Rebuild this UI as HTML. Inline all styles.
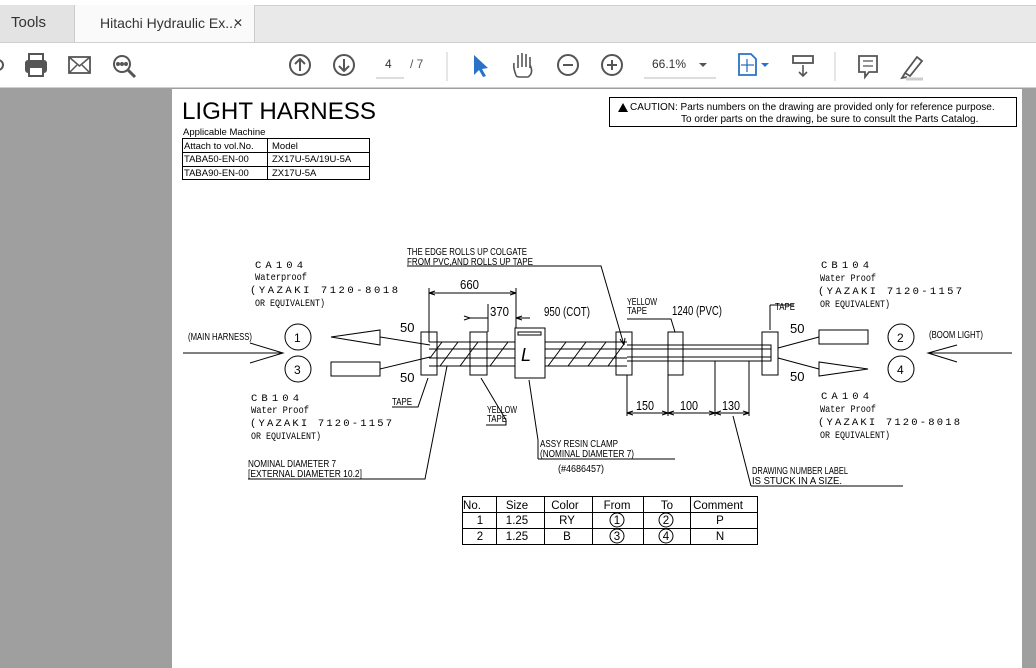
<!DOCTYPE html>
<html><head><meta charset="utf-8"><style>
html,body{margin:0;padding:0;width:1036px;height:668px;overflow:hidden;background:#9f9f9f;font-family:"Liberation Sans",sans-serif}
#top{position:absolute;left:0;top:0;width:1036px;height:5px;background:#fff}
#tabs{position:absolute;left:0;top:5px;width:1036px;height:37px;background:#e9e9e9;border-top:1px solid #d0d0d0;box-sizing:border-box}
.tab{position:absolute;top:-1px;height:38px;font-size:15px;color:#333;line-height:36px}
#tb{position:absolute;left:0;top:42px;width:1036px;height:46px;background:#fff;border-top:1px solid #cfcfcf;border-bottom:1px solid #cfcfcf;box-sizing:border-box}
#page{position:absolute;left:172px;top:89px;width:850px;height:579px;background:#fff}
</style></head><body>
<div id="top"></div>
<div id="tabs">
 <div class="tab" style="left:0;width:74px;background:#e3e3e3;border-right:1px solid #ccc;"><span style="margin-left:11px">Tools</span></div>
 <div class="tab" style="left:75px;width:179px;background:#fafafa;border-right:1px solid #ccc;"><span style="margin-left:25px;font-size:14px">Hitachi Hydraulic Ex...</span><span style="position:absolute;left:158px;font-size:12px">✕</span></div>
</div>
<div id="tb">
<svg width="1036" height="46" style="position:absolute;left:0;top:0" fill="none" stroke="#555" stroke-width="2">
 <circle cx="-2" cy="22" r="5"/>
 <rect x="26" y="18" width="20" height="11" rx="2" fill="#555"/><rect x="29" y="11" width="14" height="7"/><rect x="29" y="24" width="14" height="9" fill="#fff"/>
 <rect x="69" y="14" width="21" height="16" stroke-width="1.8"/><path d="M69 14 L79.5 23 L90 14 M69 30 L77 22 M90 30 L82 22" stroke-width="1.5"/>
 <circle cx="122" cy="21" r="8"/><path d="M128 27 L135 34" stroke-width="3"/><circle cx="118" cy="21" r="1" fill="#555"/><circle cx="122" cy="21" r="1" fill="#555"/><circle cx="126" cy="21" r="1" fill="#555"/>
 <circle cx="300" cy="22" r="10"/><path d="M300 28 V16 M295 21 L300 16 L305 21"/>
 <circle cx="344" cy="22" r="10"/><path d="M344 16 V28 M339 23 L344 28 L349 23"/>
 <path d="M376 35 H404" stroke="#bbb" stroke-width="1"/>
 <path d="M447 9 V38" stroke="#ccc" stroke-width="1"/>
 <path d="M474 12 L474 32 L479 27 L483 34 L486 33 L482 26 L488 25 Z" fill="#2a72c7" stroke="none"/>
 <path d="M516 32 Q513 25 514 20 M518 25 V12 M522 24 V10 M526 24 V11 M530 25 V14 M530 22 Q534 30 528 34 H520 Q516 34 516 32" stroke-width="1.6"/>
 <circle cx="568" cy="22" r="10"/><path d="M563 22 H573"/>
 <circle cx="612" cy="22" r="10"/><path d="M607 22 H617 M612 17 V27"/>
 <path d="M644 35 H716" stroke="#bbb" stroke-width="1"/>
 <path d="M699 20 L703 24 L707 20 Z" fill="#555" stroke="none"/>
 <path d="M739 11 H751 L756 16 V32 H739 Z" stroke="#2a72c7" stroke-width="1.8"/><path d="M747 16 V29 M741 22 H754" stroke="#2a72c7" stroke-width="1.3"/>
 <path d="M761 20 L765 24 L769 20 Z" fill="#2a72c7" stroke="none"/>
 <rect x="793" y="13" width="20" height="7" stroke-width="1.8"/><path d="M803 22 V33 M799 29 L803 33 L807 29" stroke-width="1.6"/>
 <path d="M835 9 V38" stroke="#ccc" stroke-width="1"/>
 <path d="M859 13 H877 V29 H869 L865 34 V29 H859 Z" stroke-width="1.8"/><path d="M863 18 H873 M863 23 H873" stroke-width="1.2"/>
 <path d="M905 30 L917 14 L922 18 L910 33 Z M905 30 L902 35 L907 34" stroke-width="1.8"/><path d="M906 36 H923" stroke="#ccc" stroke-width="3"/>
</svg>
<div style="position:absolute;left:385px;top:14px;font-size:12px;color:#333">4</div>
<div style="position:absolute;left:410px;top:14px;font-size:12px;color:#555">/ 7</div>
<div style="position:absolute;left:652px;top:14px;font-size:12px;color:#333">66.1%</div>
</div>
<div id="page"></div>
<svg width="1036" height="668" style="position:absolute;left:0;top:0" font-family="Liberation Sans,sans-serif" fill="#000">
<text x="182" y="119" font-size="24" textLength="194" lengthAdjust="spacingAndGlyphs">LIGHT HARNESS</text>
<text x="183" y="135" font-size="9.5">Applicable Machine</text>
<g stroke="#000" stroke-width="1" fill="none"><rect x="182.5" y="138.5" width="187" height="41"/><path d="M182 152.5 H370 M182 166.5 H370 M267.5 138 V180"/></g>
<g font-size="9.5"><text x="184" y="149">Attach to vol.No.</text><text x="272" y="149">Model</text><text x="184" y="162">TABA50-EN-00</text><text x="272" y="162">ZX17U-5A/19U-5A</text><text x="184" y="176">TABA90-EN-00</text><text x="272" y="176">ZX17U-5A</text></g>
<rect x="609.5" y="97.5" width="407" height="29" fill="none" stroke="#000"/>
<path d="M618 112 L623 103 L628 112 Z" fill="#000"/>
<g font-size="10"><text x="630" y="110">CAUTION: Parts numbers on the drawing are provided only for reference purpose.</text><text x="681" y="122">To order parts on the drawing, be sure to consult the Parts Catalog.</text></g>
<g fill="none" stroke="#000" stroke-width="1">
<path d="M429 342 H627 M429 366 H627 M429 349 H627 M429 358 H627"/>
<path d="M627 345 H771 V361 H627 M627 349 H771 M627 357 H771"/>
<path d="M440 366 L458 342 M460 366 L478 342 M490 366 L508 342 M548 366 L566 342 M568 366 L586 342 M588 366 L606 342 M608 366 L624 344 M430 358 L442 342"/>
<rect x="421" y="332" width="16" height="43"/>
<rect x="470" y="332" width="17" height="43"/>
<rect x="515" y="328" width="30" height="50" fill="#fff"/><rect x="518" y="332" width="23" height="3"/>
<rect x="616" y="332" width="16" height="43"/><rect x="668" y="332" width="15" height="43"/><rect x="762" y="332" width="16" height="43"/>
<path d="M429 288 V342 M516 288 V328 M429 293 H516 M429 293 l6 -2 M429 293 l6 2 M516 293 l-6 -2 M516 293 l-6 2"/>
<path d="M470 318 H488 M488 304 V332 M470 318 l-6 -2 M470 318 l-6 2 M516 318 l6 -2 M516 318 l6 2 M516 318 H530"/>
<path d="M627 375 V416 M668 375 V416 M715 361 V416 M749 361 V416 M627 413 H749 M627 413 l6 -2 M627 413 l6 2 M668 413 l-6 -2 M668 413 l-6 2 M668 413 l6 -2 M668 413 l6 2 M715 413 l-6 -2 M715 413 l-6 2 M715 413 l6 -2 M715 413 l6 2 M749 413 l-6 -2 M749 413 l-6 2"/>
<path d="M331 337 L380 330 V345 Z"/><rect x="331" y="362" width="49" height="14"/>
<rect x="819" y="330" width="49" height="14"/><path d="M819 362 V376 L868 369 Z"/>
<circle cx="298" cy="337" r="13"/><circle cx="298" cy="369" r="13"/><circle cx="901" cy="337" r="13"/><circle cx="901" cy="369" r="13"/>
<path d="M183 353 H283 M250 343 L283 353 L250 363"/><path d="M1012 353 H928 M957 345 L928 353 L957 362"/>
<path d="M380 337 L430 345 M380 369 L430 357 M778 348 L819 337 M778 358 L819 369"/>
<path d="M407 266 H601 L624 345 M624 345 l-4 -6 M624 345 l1 -7"/>
<path d="M627 319 H671 L675 332"/>
<path d="M770 305 H794 M770 305 V330"/>
<path d="M392 407 H418 L428 378"/>
<path d="M486 425 H506 V420 L481 378"/>
<path d="M538 459 V440 L529 380 M538 459 H675"/>
<path d="M248 479 H425 L447 366"/>
<path d="M751 486 H903 M751 486 L733 416"/>
<rect x="462.5" y="496.5" width="295" height="48"/>
<path d="M462 512.5 H758 M462 528.5 H758 M496.5 496 V545 M544.5 496 V545 M592.5 496 V545 M643.5 496 V545 M690.5 496 V545"/>
<circle cx="617" cy="520" r="7"/><circle cx="666" cy="520" r="7"/><circle cx="617" cy="536" r="7"/><circle cx="666" cy="536" r="7"/>
</g>
<text x="521" y="361" font-size="18" font-style="italic">L</text>
<g font-family="Liberation Mono,monospace" font-size="10.5">
<text x="255" y="268" textLength="48">CA104</text><text x="255" y="280" textLength="52" lengthAdjust="spacingAndGlyphs">Waterproof</text><text x="250" y="293" textLength="148">(YAZAKI 7120-8018</text><text x="255" y="306" textLength="70" lengthAdjust="spacingAndGlyphs">OR EQUIVALENT)</text>
<text x="251" y="401" textLength="48">CB104</text><text x="251" y="413" textLength="58" lengthAdjust="spacingAndGlyphs">Water Proof</text><text x="250" y="426" textLength="142">(YAZAKI 7120-1157</text><text x="251" y="439" textLength="70" lengthAdjust="spacingAndGlyphs">OR EQUIVALENT)</text>
<text x="821" y="268" textLength="48">CB104</text><text x="820" y="281" textLength="56" lengthAdjust="spacingAndGlyphs">Water Proof</text><text x="818" y="294" textLength="144">(YAZAKI 7120-1157</text><text x="820" y="307" textLength="70" lengthAdjust="spacingAndGlyphs">OR EQUIVALENT)</text>
<text x="821" y="399" textLength="48">CA104</text><text x="820" y="412" textLength="56" lengthAdjust="spacingAndGlyphs">Water Proof</text><text x="818" y="425" textLength="142">(YAZAKI 7120-8018</text><text x="820" y="438" textLength="70" lengthAdjust="spacingAndGlyphs">OR EQUIVALENT)</text>
</g>
<g font-family="Liberation Sans,sans-serif" font-size="10">
<text x="407" y="255" textLength="120" lengthAdjust="spacingAndGlyphs">THE EDGE ROLLS UP COLGATE</text><text x="407" y="265" textLength="126" lengthAdjust="spacingAndGlyphs">FROM PVC,AND ROLLS UP TAPE</text>
<text x="188" y="340" textLength="64" lengthAdjust="spacingAndGlyphs">(MAIN HARNESS)</text><text x="929" y="338" textLength="54" lengthAdjust="spacingAndGlyphs">(BOOM LIGHT)</text>
<text x="627" y="305" textLength="30" lengthAdjust="spacingAndGlyphs">YELLOW</text><text x="627" y="314" textLength="20" lengthAdjust="spacingAndGlyphs">TAPE</text>
<text x="775" y="310" textLength="20" lengthAdjust="spacingAndGlyphs">TAPE</text><text x="392" y="405" textLength="20" lengthAdjust="spacingAndGlyphs">TAPE</text>
<text x="487" y="413" textLength="30" lengthAdjust="spacingAndGlyphs">YELLOW</text><text x="487" y="422" textLength="20" lengthAdjust="spacingAndGlyphs">TAPE</text>
<text x="540" y="447" textLength="78" lengthAdjust="spacingAndGlyphs">ASSY RESIN CLAMP</text><text x="540" y="457" textLength="94" lengthAdjust="spacingAndGlyphs">(NOMINAL DIAMETER 7)</text><text x="558" y="472" textLength="46" lengthAdjust="spacingAndGlyphs">(#4686457)</text>
<text x="248" y="467" textLength="88" lengthAdjust="spacingAndGlyphs">NOMINAL DIAMETER 7</text><text x="248" y="477" textLength="114" lengthAdjust="spacingAndGlyphs">[EXTERNAL DIAMETER 10.2]</text>
<text x="752" y="474" textLength="96" lengthAdjust="spacingAndGlyphs">DRAWING NUMBER LABEL</text><text x="752" y="484" textLength="90" lengthAdjust="spacingAndGlyphs">IS STUCK IN A SIZE.</text>
</g>
<g font-family="Liberation Sans,sans-serif" font-size="13">
<text x="460" y="289" textLength="19" lengthAdjust="spacingAndGlyphs">660</text><text x="490" y="316" textLength="19" lengthAdjust="spacingAndGlyphs">370</text><text x="544" y="316" textLength="46" lengthAdjust="spacingAndGlyphs">950 (COT)</text><text x="672" y="315" textLength="50" lengthAdjust="spacingAndGlyphs">1240 (PVC)</text>
<text x="400" y="332">50</text><text x="400" y="382">50</text><text x="790" y="333">50</text><text x="790" y="381">50</text>
<text x="636" y="410" textLength="18" lengthAdjust="spacingAndGlyphs">150</text><text x="680" y="410" textLength="18" lengthAdjust="spacingAndGlyphs">100</text><text x="722" y="410" textLength="18" lengthAdjust="spacingAndGlyphs">130</text>
<text x="294" y="342" font-size="12">1</text><text x="294" y="374" font-size="12">3</text><text x="897" y="342" font-size="12">2</text><text x="897" y="374" font-size="12">4</text>
</g>
<g font-family="Liberation Sans,sans-serif" font-size="11.5" text-anchor="middle">
<text x="472" y="509">No.</text><text x="517" y="509">Size</text><text x="565" y="509">Color</text><text x="617" y="509">From</text><text x="667" y="509">To</text><text x="718" y="509">Comment</text>
<text x="480" y="524">1</text><text x="517" y="524">1.25</text><text x="567" y="524">RY</text><text x="617" y="524">1</text><text x="666" y="524">2</text><text x="720" y="524">P</text>
<text x="480" y="540">2</text><text x="517" y="540">1.25</text><text x="567" y="540">B</text><text x="617" y="540">3</text><text x="666" y="540">4</text><text x="720" y="540">N</text>
</g>
</svg>
</body></html>
